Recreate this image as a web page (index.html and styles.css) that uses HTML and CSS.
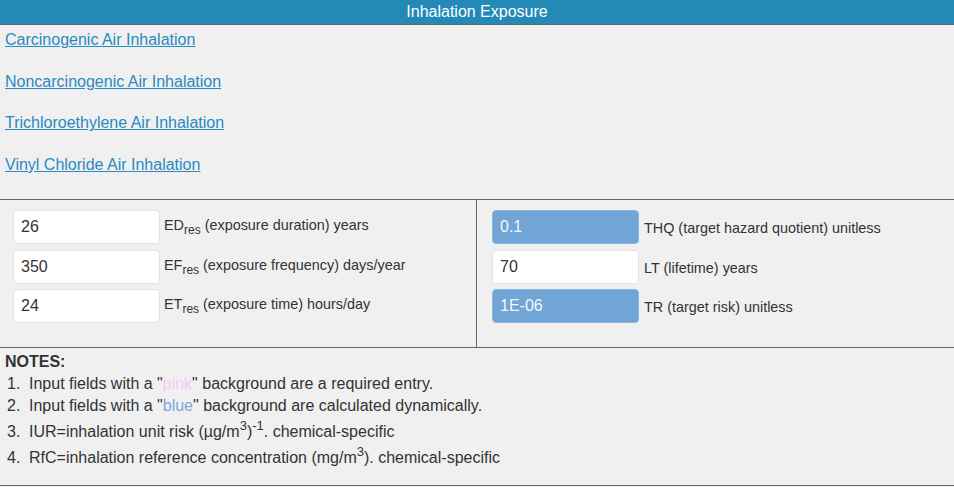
FILE: index.html
```html
<!DOCTYPE html>
<html>
<head>
<meta charset="utf-8">
<title>Inhalation Exposure</title>
<link rel="stylesheet" href="styles.css">
</head>
<body>
<div class="panel">
  <div class="header">Inhalation Exposure</div>
  <div class="links">
    <a href="#" class="link">Carcinogenic Air Inhalation</a>
    <a href="#" class="link">Noncarcinogenic Air Inhalation</a>
    <a href="#" class="link">Trichloroethylene Air Inhalation</a>
    <a href="#" class="link">Vinyl Chloride Air Inhalation</a>
  </div>
  <div class="params">
    <div class="col col-left">
      <div class="row"><input class="field" type="text" value="26"><span class="label">ED<sub>res</sub> (exposure duration) years</span></div>
      <div class="row"><input class="field" type="text" value="350"><span class="label">EF<sub>res</sub> (exposure frequency) days/year</span></div>
      <div class="row"><input class="field" type="text" value="24"><span class="label">ET<sub>res</sub> (exposure time) hours/day</span></div>
    </div>
    <div class="col col-right">
      <div class="row"><input class="field calc" type="text" value="0.1"><span class="label">THQ (target hazard quotient) unitless</span></div>
      <div class="row"><input class="field" type="text" value="70"><span class="label">LT (lifetime) years</span></div>
      <div class="row"><input class="field calc" type="text" value="1E-06"><span class="label">TR (target risk) unitless</span></div>
    </div>
  </div>
  <div class="notes">
    <div class="notes-title">NOTES:</div>
    <ol class="note-list">
      <li class="note"><span class="num">1.</span><span>Input fields with a "<span class="pink">pink</span>" background are a required entry.</span></li>
      <li class="note"><span class="num">2.</span><span>Input fields with a "<span class="blue">blue</span>" background are calculated dynamically.</span></li>
      <li class="note tall"><span class="num">3.</span><span>IUR=inhalation unit risk (µg/m<sup>3</sup>)<sup>-1</sup>. chemical-specific</span></li>
      <li class="note tall"><span class="num">4.</span><span>RfC=inhalation reference concentration (mg/m<sup>3</sup>). chemical-specific</span></li>
    </ol>
  </div>
</div>
</body>
</html>
```
FILE: styles.css
```css
html, body {
  margin: 0;
  padding: 0;
  background: #f0f0f0;
}
body {
  font-family: "Liberation Sans", Arial, sans-serif;
  color: #333;
  font-size: 16px;
}
.panel {
  width: 954px;
  height: 487px;
  overflow: hidden;
}
.header {
  height: 24px;
  line-height: 24px;
  background: #238ab8;
  color: #fff;
  text-align: center;
  font-size: 16px;
  border-bottom: 1px solid #666;
}
.links {
  display: flex;
  flex-direction: column;
  align-items: flex-start;
  gap: 16px;
  padding: 2px 5px 22px 5px;
  border-bottom: 1px solid #666;
}
.link {
  display: block;
  line-height: 25.6px;
  color: #2a8ac0;
  text-decoration: underline;
}
.params {
  display: grid;
  grid-template-columns: 1fr 1fr;
  height: 147px;
  border-bottom: 1px solid #666;
}
.col {
  display: flex;
  flex-direction: column;
  gap: 5.5px;
  padding-top: 10px;
}
.col-left {
  border-right: 1px solid #666;
  padding-left: 13px;
}
.col-right {
  padding-left: 15px;
}
.row {
  display: flex;
  align-items: center;
  height: 34px;
}
.field {
  box-sizing: border-box;
  width: 147px;
  height: 34px;
  margin: 0;
  padding: 0 7px;
  border: 1px solid #e2e2e2;
  border-radius: 4px;
  background: #fff;
  color: #333;
  font-family: "Liberation Sans", Arial, sans-serif;
  font-size: 16px;
  outline: none;
}
.field.calc {
  background: #71a5d5;
  border-color: #8db6dd;
  color: #f4f8fc;
}
.label {
  margin-left: 4px;
  font-size: 14.4px;
  color: #333;
}
.col-right .label {
  margin-left: 5px;
  padding-top: 2px;
}
.notes {
  padding: 2px 5px 0 5px;
  height: 138px;
  box-sizing: border-box;
  border-bottom: 1px solid #666;
}
.notes-title {
  font-weight: bold;
  line-height: 22px;
  padding-top: 1px;
}
.note-list {
  list-style: none;
  margin: 0;
  padding: 0 0 0 2px;
}
.note {
  display: flex;
  line-height: 22px;
}
.note.tall {
  padding-top: 4px;
}
.num {
  width: 22px;
  flex: none;
}
.note sup {
  line-height: 0;
  font-size: 13px;
  vertical-align: 7px;
}
.pink {
  color: #f8c8f4;
}
.blue {
  color: #78a8d8;
}
```
